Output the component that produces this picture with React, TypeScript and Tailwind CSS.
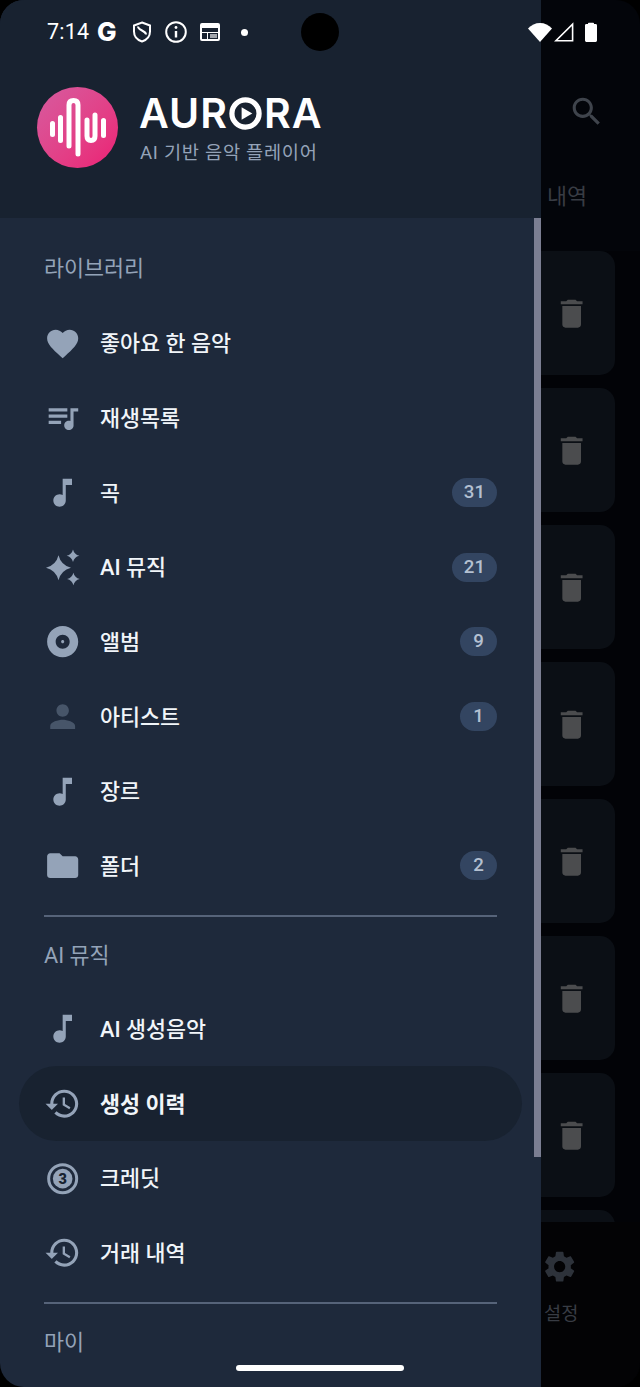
const P = {
  heart: "M12 21.35l-1.45-1.32C5.4 15.36 2 12.28 2 8.5 2 5.42 4.42 3 7.5 3c1.74 0 3.41.81 4.5 2.09C13.09 3.81 14.76 3 16.5 3 19.58 3 22 5.42 22 8.5c0 3.78-3.4 6.86-8.55 11.54L12 21.35z",
  queue: "M15 6H3v2h12V6zm0 4H3v2h12v-2zM3 16h8v-2H3v2zM17 6v8.18c-.31-.11-.65-.18-1-.18-1.66 0-3 1.34-3 3s1.34 3 3 3 3-1.34 3-3V8h3V6h-5z",
  note: "M12 3v10.55c-.59-.34-1.27-.55-2-.55-2.21 0-4 1.79-4 4s1.79 4 4 4 4-1.79 4-4V7h4V3h-6z",
  album: "M12 2C6.48 2 2 6.48 2 12s4.48 10 10 10 10-4.48 10-10S17.52 2 12 2zm0 14.5c-2.49 0-4.5-2.01-4.5-4.5S9.51 7.5 12 7.5s4.5 2.01 4.5 4.5-2.01 4.5-4.5 4.5zm0-5.5c-.55 0-1 .45-1 1s.45 1 1 1 1-.45 1-1-.45-1-1-1z",
  person: "M12 12c2.21 0 4-1.79 4-4s-1.79-4-4-4-4 1.79-4 4 1.79 4 4 4zm0 2c-2.67 0-8 1.34-8 4v2h16v-2c0-2.66-5.33-4-8-4z",
  folder: "M10 4H4c-1.1 0-1.99.9-1.99 2L2 18c0 1.1.9 2 2 2h16c1.1 0 2-.9 2-2V8c0-1.1-.9-2-2-2h-8l-2-2z",
  history: "M13 3c-4.97 0-9 4.03-9 9H1l3.89 3.89.07.14L9 12H6c0-3.87 3.13-7 7-7s7 3.13 7 7-3.13 7-7 7c-1.93 0-3.68-.79-4.94-2.06l-1.42 1.42C8.27 19.99 10.51 21 13 21c4.97 0 9-4.03 9-9s-4.03-9-9-9zm-1 5v5l4.28 2.54.72-1.21-3.5-2.08V8H12z",
  trash: "M6 19c0 1.1.9 2 2 2h8c1.1 0 2-.9 2-2V7H6v12zM19 4h-3.5l-1-1h-5l-1 1H5v2h14V4z",
  search: "M15.5 14h-.79l-.28-.27C15.41 12.59 16 11.11 16 9.5 16 5.91 13.09 3 9.5 3S3 5.91 3 9.5 5.91 16 9.5 16c1.61 0 3.09-.59 4.23-1.57l.27.28v.79l5 4.99L20.49 19l-4.99-5zm-6 0C7.01 14 5 11.99 5 9.5S7.01 5 9.5 5 14 7.01 14 9.5 11.99 14 9.5 14z",
  gear: "M19.14 12.94c.04-.3.06-.61.06-.94 0-.32-.02-.64-.07-.94l2.03-1.58c.18-.14.23-.41.12-.61l-1.92-3.32c-.12-.22-.37-.29-.59-.22l-2.39.96c-.5-.38-1.03-.7-1.62-.94l-.36-2.54c-.04-.24-.24-.41-.48-.41h-3.84c-.24 0-.43.17-.47.41l-.36 2.54c-.59.24-1.13.57-1.62.94l-2.39-.96c-.22-.08-.47 0-.59.22L2.74 8.87c-.12.21-.08.47.12.61l2.03 1.58c-.05.3-.09.63-.09.94s.02.64.07.94l-2.03 1.58c-.18.14-.23.41-.12.61l1.92 3.32c.12.22.37.29.59.22l2.39-.96c.5.38 1.03.7 1.62.94l.36 2.54c.05.24.24.41.48.41h3.84c.24 0 .44-.17.47-.41l.36-2.54c.59-.24 1.13-.56 1.62-.94l2.39.96c.22.08.47 0 .59-.22l1.92-3.32c.12-.22.07-.47-.12-.61l-2.01-1.58zM12 15.6c-1.98 0-3.6-1.62-3.6-3.6s1.62-3.6 3.6-3.6 3.6 1.62 3.6 3.6-1.62 3.6-3.6 3.6z",
};

function Mi({ d, className }: { d: string; className: string }) {
  return (
    <svg viewBox="0 0 24 24" className={className} fill="currentColor">
      <path d={d} />
    </svg>
  );
}

function star(cx: number, cy: number, r: number) {
  const k = r * 0.2;
  return `M${cx} ${cy - r}Q${cx + k} ${cy - k} ${cx + r} ${cy}Q${cx + k} ${cy + k} ${cx} ${cy + r}Q${cx - k} ${cy + k} ${cx - r} ${cy}Q${cx - k} ${cy - k} ${cx} ${cy - r}Z`;
}

function Sparkle() {
  return (
    <svg viewBox="0 0 37.33 37.33" className="w-[37.33px] h-[37.33px] text-[#94a3b8] shrink-0" fill="currentColor">
      <path d={star(14.5, 18.7, 12.5)} />
      <path d={star(29, 6.8, 6.3)} />
      <path d={star(29.4, 30, 6.3)} />
    </svg>
  );
}

function Credit() {
  return (
    <svg viewBox="0 0 37.33 37.33" className="w-[37.33px] h-[37.33px] text-[#94a3b8] shrink-0">
      <circle cx="18.67" cy="18.67" r="14" fill="none" stroke="currentColor" strokeWidth="3" />
      <circle cx="18.67" cy="18.67" r="9.8" fill="currentColor" />
      <text x="18.67" y="23.800" textAnchor="middle" fontSize="14.5" fontWeight="900" fill="#182230" fontFamily="Roboto, sans-serif">3</text>
    </svg>
  );
}

const iconCls = "w-[37.33px] h-[37.33px] text-[#94a3b8] shrink-0";

function Row({ icon, label, badge, active }: { icon: React.ReactNode; label: string; badge?: string; active?: boolean }) {
  return (
    <div className={`mx-[19px] px-[25px] h-[74.67px] flex items-center gap-[18.67px] rounded-full ${active ? "bg-[#182230]" : ""}`}>
      {icon}
      <span className={`flex-1 text-[21.78px] text-[#f1f5f9] leading-[30px] pt-[2px] ${active ? "font-bold" : "font-medium"}`}>{label}</span>
      {badge && (
        <span className="h-[29px] min-w-[37px] px-[12px] rounded-full bg-[#334561] text-[#b4c0d1] text-[18.67px] font-medium leading-[29px] text-center">
          {badge}
        </span>
      )}
    </div>
  );
}

function Section({ label, first }: { label: string; first?: boolean }) {
  return (
    <div className={`px-[44px] text-[21.78px] leading-[30px] text-[#94a3b8] ${first ? "pt-[36px] pb-[22px]" : "pt-[24px] pb-[20.5px]"}`}>
      {label}
    </div>
  );
}

function Divider() {
  return <div className="mx-[44px] mt-[12px] h-[2px] bg-[#566379]" />;
}

function Card() {
  return (
    <div className="h-[124px] shrink-0 rounded-r-[15px] bg-[#0b0f15] flex items-center justify-end pr-[25px] pt-[2px]">
      <Mi d={P.trash} className="w-[37.33px] h-[37.33px] text-[#4b4c4e]" />
    </div>
  );
}

function StatusBar() {
  return (
    <div className="absolute top-0 left-0 right-0 h-[64px] text-white">
      <div className="absolute left-[47px] top-0 h-[64px] flex items-center">
        <span className="text-[21.5px] w-[50px] leading-none font-normal tracking-[0.2px]">7:14</span>
        <span className="text-[26px] font-extrabold w-[35px] leading-none" style={{ fontFamily: 'Inter, sans-serif' }}>G</span>
        <svg viewBox="0 0 20 22" className="w-[20px] h-[22px] mr-[13px]" fill="none" stroke="currentColor" strokeWidth="2">
          <path d="M10 1.5l8 3v6c0 5-3.4 8.5-8 10-4.6-1.5-8-5-8-10v-6z" />
          <path d="M6 5.5c0 4 8 4 8 8" />
        </svg>
        <svg viewBox="0 0 22 22" className="w-[22px] h-[22px] mr-[12px]" fill="none" stroke="currentColor" strokeWidth="2">
          <circle cx="11" cy="11" r="9.8" />
          <path d="M11 10v6.5" strokeWidth="2.4" />
          <circle cx="11" cy="6.5" r="1.4" fill="currentColor" stroke="none" />
        </svg>
        <svg viewBox="0 0 22 20" className="w-[22px] h-[20px] mr-[20px]" fill="currentColor">
          <path fillRule="evenodd" d="M1 3q0-2 2-2h16q2 0 2 2v14q0 2-2 2H3q-2 0-2-2zM3 6v11h5v-6H3v-1h16V6zm6 5v6h10v-6z" />
          <path d="M11 12h7v4h-7z" opacity="0.6" />
        </svg>
        <span className="w-[7px] h-[7px] rounded-full bg-white" />
      </div>
      <div className="absolute left-[301px] top-[13px] w-[38px] h-[38px] rounded-full bg-black" />
      <div className="absolute left-[528px] top-[22px] flex items-center">
        <svg viewBox="0 0 24 20" className="w-[24px] h-[20px]" fill="currentColor">
          <path d="M12 20L0 6.5C3.2 3 7.4 1 12 1s8.8 2 12 5.5z" />
        </svg>
        <svg viewBox="0 0 20 20" className="w-[20px] h-[20px] ml-[2px]" fill="none" stroke="currentColor" strokeWidth="1.6">
          <path d="M18.6 2.2V18.8H1.9z" />
        </svg>
        <svg viewBox="0 0 14 20" className="w-[14px] h-[20px] ml-[10px]" fill="currentColor">
          <path d="M4 2V1.5q0-.8.8-.8h4.4q.8 0 .8.8V2h1.6q1.4 0 1.4 1.4v15.2q0 1.4-1.4 1.4H2.4Q1 20 1 18.6V3.4Q1 2 2.4 2z" />
        </svg>
      </div>
    </div>
  );
}

function Logo() {
  return (
    <div className="w-[81px] h-[81px] rounded-full bg-gradient-to-br from-[#d65a9f] to-[#eb1c74] shrink-0">
      <svg viewBox="37 87 81 81" className="w-[81px] h-[81px]" fill="none" stroke="white" strokeWidth="5" strokeLinecap="round" strokeLinejoin="round">
        <path d="M52.5 123.5v11" />
        <path d="M60.5 117.5v23" />
        <path d="M69 146V105q0-4.500 4.500-4.500t4.500 4.500v49" />
        <path d="M87 120v16q0 4.500 4 4.500t4-4.500v-21" />
        <path d="M103.500 120.500v15" />
      </svg>
    </div>
  );
}

function Wordmark() {
  return (
    <div className="flex items-center h-[36px] text-white text-[41px] font-semibold leading-none tracking-[1px] -ml-[1px]" style={{ fontFamily: 'Inter, sans-serif' }}>
      <span>AUR</span>
      <svg viewBox="0 0 34 34" className="w-[33px] h-[33px] mx-[1.500px]">
        <circle cx="17" cy="17" r="14" fill="none" stroke="white" strokeWidth="5.4" />
        <path d="M13 10.500L24 17 13 23.500z" fill="white" />
      </svg>
      <span>RA</span>
    </div>
  );
}

export default function App() {
  return (
    <div className="w-[640px] h-[1387px] bg-black overflow-hidden" style={{ fontFamily: 'Roboto, "Noto Sans CJK KR", sans-serif' }}>
      <div className="relative w-full h-full flex overflow-hidden rounded-[24px]">
        <div className="relative w-[541px] h-full shrink-0 overflow-hidden bg-[#1e293b]">
          <div className="h-[218px] bg-[#182230] pt-[87px] pl-[37px] flex gap-[22px]">
            <Logo />
            <div className="flex flex-col pt-[8px]">
              <Wordmark />
              <span className="text-[18.67px] leading-[26px] mt-[9px] text-[#94a3b8] tracking-[0.7px]">AI 기반 음악 플레이어</span>
            </div>
          </div>
          <Section first label="라이브러리" />
          <Row icon={<Mi d={P.heart} className={iconCls} />} label="좋아요 한 음악" />
          <Row icon={<Mi d={P.queue} className={iconCls} />} label="재생목록" />
          <Row icon={<Mi d={P.note} className={iconCls} />} label="곡" badge="31" />
          <Row icon={<Sparkle />} label="AI 뮤직" badge="21" />
          <Row icon={<Mi d={P.album} className={iconCls} />} label="앨범" badge="9" />
          <Row icon={<Mi d={P.person} className="w-[37.33px] h-[37.33px] text-[#475569] shrink-0" />} label="아티스트" badge="1" />
          <Row icon={<Mi d={P.note} className={iconCls} />} label="장르" />
          <Row icon={<Mi d={P.folder} className={iconCls} />} label="폴더" badge="2" />
          <Divider />
          <Section label="AI 뮤직" />
          <Row icon={<Mi d={P.note} className={iconCls} />} label="AI 생성음악" />
          <Row active icon={<Mi d={P.history} className={iconCls} />} label="생성 이력" />
          <Row icon={<Credit />} label="크레딧" />
          <Row icon={<Mi d={P.history} className={iconCls} />} label="거래 내역" />
          <Divider />
          <Section label="마이" />
          <div className="absolute right-0 top-[218px] w-[7px] h-[939px] bg-[#7b7e92]" />
        </div>

        <div className="flex-1 flex flex-col bg-[#03050a] min-w-0">
          <div className="h-[251px] shrink-0 flex flex-col">
            <div className="pt-[93px] pl-[26.500px]">
              <Mi d={P.search} className="w-[37.33px] h-[37.33px] text-[#3f444c]" />
            </div>
            <span className="mt-[52px] pl-[6px] text-[21.78px] leading-[30px] text-[#383c44]">내역</span>
          </div>
          <div className="flex-1 min-h-0 overflow-hidden flex flex-col gap-[13px] pr-[25px] bg-[#020307]">
            <Card />
            <Card />
            <Card />
            <Card />
            <Card />
            <Card />
            <Card />
            <Card />
          </div>
          <div className="h-[165px] shrink-0 bg-[#030305] flex flex-col items-start">
            <Mi d={P.gear} className="w-[37.33px] h-[37.33px] mt-[26px] text-[#2d323a]" />
            <span className="mt-[16px] pl-[3px] text-[18.67px] leading-[26px] text-[#383c44]">설정</span>
          </div>
        </div>

        <StatusBar />
        <div className="absolute left-[236px] top-[1365px] w-[168px] h-[6px] rounded-full bg-white" />
      </div>
    </div>
  );
}
